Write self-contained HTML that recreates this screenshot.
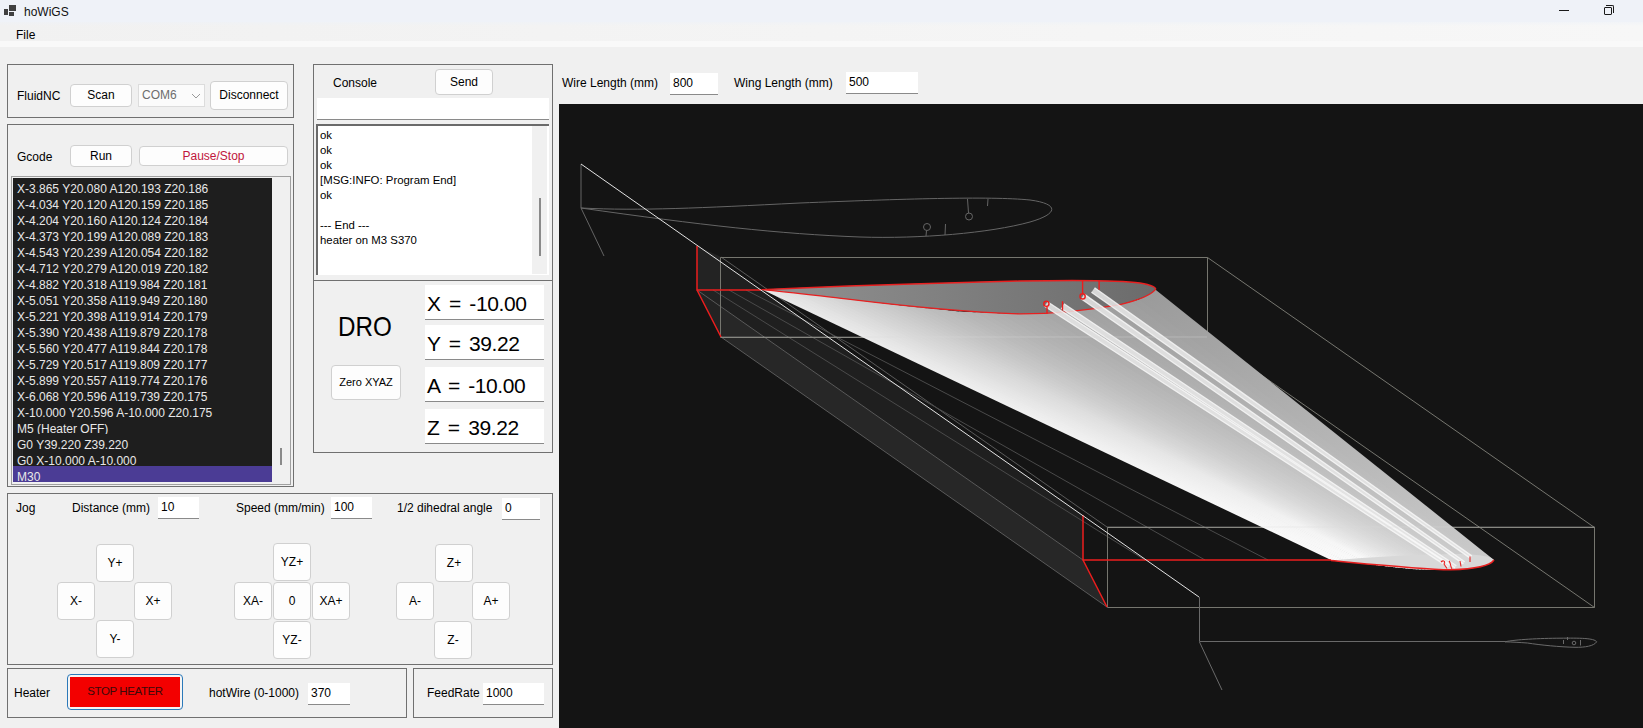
<!DOCTYPE html>
<html><head><meta charset="utf-8">
<style>
*{box-sizing:border-box;margin:0;padding:0}
html,body{width:1643px;height:728px;overflow:hidden;background:#f0f0f0;font-family:"Liberation Sans",sans-serif;font-size:12px;color:#000}
.a{position:absolute}
.t{position:absolute;white-space:nowrap;line-height:14px}
#title{left:0;top:0;width:1643px;height:22px;background:#eff2f8}
#menu{left:0;top:22px;width:1643px;height:25px;background:linear-gradient(to bottom,rgba(238,242,248,0.6),rgba(240,240,240,0) 4px),linear-gradient(to right,#f1f1f1,#f7f7f7);border-bottom:6px solid #f9f9f9}
.grp{position:absolute;border:1px solid #707070}
.btn{position:absolute;background:#fdfdfd;border:1px solid #d0d0d0;border-radius:4px;text-align:center;white-space:nowrap}
.tb{position:absolute;background:#fff;border-bottom:1px solid #8a8a8a;white-space:nowrap;padding-left:3px}
.lb{position:absolute;left:13px;top:178px;width:259px;height:304px;background:#1e1e1e;overflow:hidden}
.lb div{height:16px;line-height:22px;overflow:hidden;padding-left:4px;color:#e8e8e8;white-space:nowrap}
.jb{width:38px;height:38px;line-height:37px}
.dro{font-size:21px;line-height:38px;padding-left:2px;word-spacing:3px;letter-spacing:-0.4px}
.lb div.sel{background:#4b3c95}
.con div{height:15px;line-height:15px;white-space:nowrap;font-size:11.4px}
</style></head><body>
<div id="title" class="a">
  <div class="a" style="left:4px;top:9px;width:4px;height:6px;background:#404040"></div>
  <div class="a" style="left:9px;top:5px;width:7px;height:6px;background:#404040"></div>
  <div class="a" style="left:9px;top:12px;width:5px;height:4px;background:#404040"></div>
  <div class="t" style="left:24px;top:5px;font-size:12px;color:#111">hoWiGS</div>
  <div class="a" style="left:1559px;top:10px;width:10px;height:1px;background:#1a1a1a"></div>
  <div class="a" style="left:1604px;top:7px;width:8px;height:8px;border:1px solid #1a1a1a;border-radius:1px"></div>
  <div class="a" style="left:1606px;top:5px;width:8px;height:8px;border-top:1px solid #1a1a1a;border-right:1px solid #1a1a1a;border-radius:0 2px 0 0"></div>
</div>
<div id="menu" class="a">
  <div class="t" style="left:16px;top:6px">File</div>
</div>

<!-- FluidNC group -->
<div class="grp" style="left:7px;top:64px;width:287px;height:54px"></div>
<div class="t" style="left:17px;top:89px">FluidNC</div>
<div class="btn" style="left:70px;top:84px;width:62px;height:23px;line-height:21px">Scan</div>
<div class="a" style="left:138px;top:84px;width:67px;height:23px;background:#fbfbfb;border:1px solid #dcdcdc;color:#6d6d6d;padding-left:3px;line-height:21px">COM6</div>
<svg class="a chev" style="left:191px;top:93px" width="10" height="6"><path d="M1,1 L5,5 L9,1" fill="none" stroke="#9a9a9a" stroke-width="1"/></svg>
<div class="btn" style="left:210px;top:81px;width:78px;height:29px;line-height:27px">Disconnect</div>

<!-- Gcode group -->
<div class="grp" style="left:7px;top:124px;width:287px;height:363px"></div>
<div class="t" style="left:17px;top:150px">Gcode</div>
<div class="btn" style="left:70px;top:145px;width:62px;height:22px;line-height:20px">Run</div>
<div class="btn" style="left:139px;top:146px;width:149px;height:20px;line-height:18px;color:#c0163c">Pause/Stop</div>
<div class="a" style="left:11px;top:176px;width:280px;height:309px;border:1px solid #a0a0a0;background:#f0f0f0"></div>
<div class="a" style="left:280px;top:448px;width:2px;height:17px;background:#8a8a8a"></div>
<div class="lb" id="gcode"><div>X-3.865 Y20.080 A120.193 Z20.186</div><div>X-4.034 Y20.120 A120.159 Z20.185</div><div>X-4.204 Y20.160 A120.124 Z20.184</div><div>X-4.373 Y20.199 A120.089 Z20.183</div><div>X-4.543 Y20.239 A120.054 Z20.182</div><div>X-4.712 Y20.279 A120.019 Z20.182</div><div>X-4.882 Y20.318 A119.984 Z20.181</div><div>X-5.051 Y20.358 A119.949 Z20.180</div><div>X-5.221 Y20.398 A119.914 Z20.179</div><div>X-5.390 Y20.438 A119.879 Z20.178</div><div>X-5.560 Y20.477 A119.844 Z20.178</div><div>X-5.729 Y20.517 A119.809 Z20.177</div><div>X-5.899 Y20.557 A119.774 Z20.176</div><div>X-6.068 Y20.596 A119.739 Z20.175</div><div>X-10.000 Y20.596 A-10.000 Z20.175</div><div>M5 (Heater OFF)</div><div>G0 Y39.220 Z39.220</div><div>G0 X-10.000 A-10.000</div><div class="sel">M30</div></div>

<!-- Console group -->
<div class="grp" style="left:313px;top:64px;width:240px;height:217px"></div>
<div class="t" style="left:333px;top:76px">Console</div>
<div class="btn" style="left:435px;top:69px;width:58px;height:26px;line-height:24px">Send</div>
<div class="a" style="left:317px;top:98px;width:232px;height:22px;background:#fff;border-bottom:1px solid #8a8a8a"></div>
<div class="a con" style="left:316px;top:124px;width:233px;height:151px;background:#fff;border-top:2px solid #6a6a6a;border-left:2px solid #6a6a6a;padding-left:2px;padding-top:2px"><div>ok</div><div>ok</div><div>ok</div><div>[MSG:INFO: Program End]</div><div>ok</div><div>&nbsp;</div><div>--- End ---</div><div>heater on M3 S370</div></div>

<div class="a" style="left:532px;top:126px;width:15px;height:148px;background:#f0f0f0"></div>
<div class="a" style="left:539px;top:198px;width:2px;height:58px;background:#8a8a8a"></div>
<!-- DRO group -->
<div class="grp" style="left:313px;top:280px;width:240px;height:173px"></div>
<div class="t" style="left:338px;top:312px;font-size:27.5px;line-height:30px;transform:scaleX(0.88);transform-origin:0 0">DRO</div>
<div class="btn" style="left:331px;top:365px;width:70px;height:35px;line-height:33px;font-size:11px">Zero XYAZ</div>
<div class="tb dro" style="left:425px;top:285px;width:119px;height:35px">X = -10.00</div>
<div class="tb dro" style="left:425px;top:325px;width:119px;height:35px">Y = 39.22</div>
<div class="tb dro" style="left:425px;top:367px;width:119px;height:35px">A = -10.00</div>
<div class="tb dro" style="left:425px;top:409px;width:119px;height:35px">Z = 39.22</div>

<!-- Jog group -->
<div class="grp" style="left:7px;top:493px;width:546px;height:172px"></div>
<div class="t" style="left:16px;top:501px">Jog</div>
<div class="t" style="left:72px;top:501px">Distance (mm)</div>
<div class="tb" style="left:158px;top:497px;width:41px;height:22px;line-height:20px">10</div>
<div class="t" style="left:236px;top:501px">Speed (mm/min)</div>
<div class="tb" style="left:331px;top:497px;width:41px;height:22px;line-height:20px">100</div>
<div class="t" style="left:397px;top:501px">1/2 dihedral angle</div>
<div class="tb" style="left:502px;top:498px;width:38px;height:22px;line-height:20px">0</div>
<div class="btn jb" style="left:96px;top:544px">Y+</div>
<div class="btn jb" style="left:57px;top:582px">X-</div>
<div class="btn jb" style="left:134px;top:582px">X+</div>
<div class="btn jb" style="left:96px;top:620px">Y-</div>
<div class="btn jb" style="left:273px;top:543px">YZ+</div>
<div class="btn jb" style="left:234px;top:582px">XA-</div>
<div class="btn jb" style="left:273px;top:582px">0</div>
<div class="btn jb" style="left:312px;top:582px">XA+</div>
<div class="btn jb" style="left:273px;top:621px">YZ-</div>
<div class="btn jb" style="left:435px;top:544px">Z+</div>
<div class="btn jb" style="left:396px;top:582px">A-</div>
<div class="btn jb" style="left:472px;top:582px">A+</div>
<div class="btn jb" style="left:434px;top:621px">Z-</div>

<!-- Heater group -->
<div class="grp" style="left:7px;top:668px;width:400px;height:50px"></div>
<div class="t" style="left:14px;top:686px">Heater</div>
<div class="a" style="left:67px;top:674px;width:116px;height:36px;border:1.5px solid #2b79b9;border-radius:4px;background:#f4f4f4"></div>
<div class="a" style="left:70px;top:677px;width:110px;height:30px;background:#f30000;color:#3a0a0a;text-align:center;line-height:29px;font-size:11.5px;letter-spacing:-0.4px">STOP HEATER</div>
<div class="t" style="left:209px;top:686px">hotWire (0-1000)</div>
<div class="tb" style="left:308px;top:683px;width:42px;height:22px;line-height:20px">370</div>
<div class="grp" style="left:413px;top:668px;width:140px;height:50px"></div>
<div class="t" style="left:427px;top:686px">FeedRate</div>
<div class="tb" style="left:483px;top:683px;width:61px;height:22px;line-height:20px">1000</div>

<!-- right top -->
<div class="t" style="left:562px;top:76px">Wire Length (mm)</div>
<div class="tb" style="left:670px;top:73px;width:48px;height:22px;line-height:20px">800</div>
<div class="t" style="left:734px;top:76px">Wing Length (mm)</div>
<div class="tb" style="left:846px;top:72px;width:72px;height:22px;line-height:20px">500</div>

<svg id="view" class="a" style="left:559px;top:104px" width="1084" height="624" viewBox="559 104 1084 624">
<defs>
<linearGradient id="wg" gradientUnits="userSpaceOnUse" x1="762" y1="289.5" x2="835" y2="136">
<stop offset="0" stop-color="#eeeeee"/><stop offset="0.3" stop-color="#d2d2d2"/><stop offset="0.65" stop-color="#b4b4b4"/><stop offset="1" stop-color="#949494"/></linearGradient>
<linearGradient id="sg" gradientUnits="userSpaceOnUse" x1="1000" y1="330" x2="1450" y2="560">
<stop offset="0" stop-color="#ffffff" stop-opacity="0"/><stop offset="1" stop-color="#ffffff" stop-opacity="0.45"/></linearGradient>
<linearGradient id="rg" gradientUnits="userSpaceOnUse" x1="800" y1="300" x2="1150" y2="290">
<stop offset="0" stop-color="#8e8e8e"/><stop offset="1" stop-color="#6c6c6c"/></linearGradient>
</defs>
<rect x="559" y="104" width="1084" height="624" fill="#141414"/>
<g fill="none" stroke="#656565" stroke-width="1">
<path d="M581,164 L581,208 L604,256"/>
<path d="M581,208 C640,211 700,208 800,203 C900,199 990,196 1030,200 C1060,204 1058,214 1030,222 C990,233 920,239 860,237 C780,234 700,225 581,208 Z"/>
<circle cx="927" cy="227" r="3.5"/><path d="M926.5,230.5 L926,236"/><circle cx="969" cy="216.5" r="3.5"/><path d="M968.5,213 L967.5,199"/><path d="M945.5,224 L945,235"/><path d="M988,199 L987.5,206"/>
</g>
<polygon points="697,290 721,337 1107,607 1083,560" fill="#272727"/>
<polygon points="697,246 697,290 1083,560 1083,515" fill="#1f1f1f"/>
<polygon points="697,246 721,257 721,337 697,290" fill="#232323"/>
<g stroke="#5a5a5a" stroke-width="1" fill="none">
<path d="M697,290 L1083,560 M721,337 L1107,607 M721,257 L1107,527"/>
</g>
<g stroke="#4a4a4a" stroke-width="1" fill="none">
<path d="M713,290 L1145,560 M729,290 L1205,560 M746,290 L1268,560"/>
</g>
<g stroke="#76766f" stroke-width="1" fill="none">
<path d="M720.5,257.5 L1207.5,257.5 L1207.5,337.5 L720.5,337.5 Z M1207.5,257.5 L1594.5,527.5 M1207.5,337.5 L1594.5,607.5 M1107.5,527.5 L1594.5,527.5 L1594.5,607.5 L1107.5,607.5 Z"/>
</g>
<defs><linearGradient id="w0" gradientUnits="userSpaceOnUse" x1="766.1" y1="289.9" x2="1332.7" y2="560.1"><stop offset="0" stop-color="rgb(231,231,231)"/><stop offset="1" stop-color="rgb(250,250,250)"/></linearGradient><linearGradient id="w1" gradientUnits="userSpaceOnUse" x1="774.3" y1="290.5" x2="1336.1" y2="560.4"><stop offset="0" stop-color="rgb(228,228,228)"/><stop offset="1" stop-color="rgb(250,250,250)"/></linearGradient><linearGradient id="w2" gradientUnits="userSpaceOnUse" x1="782.5" y1="291.1" x2="1339.5" y2="560.6"><stop offset="0" stop-color="rgb(226,226,226)"/><stop offset="1" stop-color="rgb(250,250,250)"/></linearGradient><linearGradient id="w3" gradientUnits="userSpaceOnUse" x1="790.7" y1="291.8" x2="1342.9" y2="560.9"><stop offset="0" stop-color="rgb(224,224,224)"/><stop offset="1" stop-color="rgb(250,250,250)"/></linearGradient><linearGradient id="w4" gradientUnits="userSpaceOnUse" x1="798.9" y1="292.9" x2="1346.3" y2="561.4"><stop offset="0" stop-color="rgb(221,221,221)"/><stop offset="1" stop-color="rgb(250,250,250)"/></linearGradient><linearGradient id="w5" gradientUnits="userSpaceOnUse" x1="807.1" y1="293.9" x2="1349.7" y2="561.8"><stop offset="0" stop-color="rgb(219,219,219)"/><stop offset="1" stop-color="rgb(250,250,250)"/></linearGradient><linearGradient id="w6" gradientUnits="userSpaceOnUse" x1="815.3" y1="294.9" x2="1353.1" y2="562.2"><stop offset="0" stop-color="rgb(217,217,217)"/><stop offset="1" stop-color="rgb(250,250,250)"/></linearGradient><linearGradient id="w7" gradientUnits="userSpaceOnUse" x1="823.5" y1="296.0" x2="1356.5" y2="562.6"><stop offset="0" stop-color="rgb(215,215,215)"/><stop offset="1" stop-color="rgb(250,250,250)"/></linearGradient><linearGradient id="w8" gradientUnits="userSpaceOnUse" x1="831.6" y1="297.0" x2="1359.9" y2="563.1"><stop offset="0" stop-color="rgb(212,212,212)"/><stop offset="1" stop-color="rgb(250,250,250)"/></linearGradient><linearGradient id="w9" gradientUnits="userSpaceOnUse" x1="839.8" y1="298.1" x2="1363.3" y2="563.5"><stop offset="0" stop-color="rgb(210,210,210)"/><stop offset="1" stop-color="rgb(250,250,250)"/></linearGradient><linearGradient id="w10" gradientUnits="userSpaceOnUse" x1="848.0" y1="299.1" x2="1366.7" y2="563.9"><stop offset="0" stop-color="rgb(208,208,208)"/><stop offset="1" stop-color="rgb(250,250,250)"/></linearGradient><linearGradient id="w11" gradientUnits="userSpaceOnUse" x1="856.2" y1="300.1" x2="1370.1" y2="564.4"><stop offset="0" stop-color="rgb(206,206,206)"/><stop offset="1" stop-color="rgb(250,250,250)"/></linearGradient><linearGradient id="w12" gradientUnits="userSpaceOnUse" x1="864.4" y1="301.1" x2="1373.4" y2="564.8"><stop offset="0" stop-color="rgb(204,204,204)"/><stop offset="1" stop-color="rgb(250,250,250)"/></linearGradient><linearGradient id="w13" gradientUnits="userSpaceOnUse" x1="872.6" y1="302.1" x2="1376.8" y2="565.2"><stop offset="0" stop-color="rgb(202,202,202)"/><stop offset="1" stop-color="rgb(250,250,250)"/></linearGradient><linearGradient id="w14" gradientUnits="userSpaceOnUse" x1="880.8" y1="303.1" x2="1380.2" y2="565.6"><stop offset="0" stop-color="rgb(200,200,200)"/><stop offset="1" stop-color="rgb(248,248,248)"/></linearGradient><linearGradient id="w15" gradientUnits="userSpaceOnUse" x1="889.0" y1="304.1" x2="1383.6" y2="566.0"><stop offset="0" stop-color="rgb(198,198,198)"/><stop offset="1" stop-color="rgb(246,246,246)"/></linearGradient><linearGradient id="w16" gradientUnits="userSpaceOnUse" x1="897.2" y1="305.1" x2="1387.0" y2="566.4"><stop offset="0" stop-color="rgb(196,196,196)"/><stop offset="1" stop-color="rgb(244,244,244)"/></linearGradient><linearGradient id="w17" gradientUnits="userSpaceOnUse" x1="905.4" y1="306.1" x2="1390.4" y2="566.8"><stop offset="0" stop-color="rgb(194,194,194)"/><stop offset="1" stop-color="rgb(242,242,242)"/></linearGradient><linearGradient id="w18" gradientUnits="userSpaceOnUse" x1="913.6" y1="306.9" x2="1393.8" y2="567.2"><stop offset="0" stop-color="rgb(192,192,192)"/><stop offset="1" stop-color="rgb(240,240,240)"/></linearGradient><linearGradient id="w19" gradientUnits="userSpaceOnUse" x1="921.8" y1="307.8" x2="1397.2" y2="567.5"><stop offset="0" stop-color="rgb(190,190,190)"/><stop offset="1" stop-color="rgb(238,238,238)"/></linearGradient><linearGradient id="w20" gradientUnits="userSpaceOnUse" x1="930.0" y1="308.6" x2="1400.6" y2="567.9"><stop offset="0" stop-color="rgb(188,188,188)"/><stop offset="1" stop-color="rgb(236,236,236)"/></linearGradient><linearGradient id="w21" gradientUnits="userSpaceOnUse" x1="938.2" y1="309.4" x2="1404.0" y2="568.2"><stop offset="0" stop-color="rgb(187,187,187)"/><stop offset="1" stop-color="rgb(235,235,235)"/></linearGradient><linearGradient id="w22" gradientUnits="userSpaceOnUse" x1="946.4" y1="310.2" x2="1407.4" y2="568.6"><stop offset="0" stop-color="rgb(185,185,185)"/><stop offset="1" stop-color="rgb(233,233,233)"/></linearGradient><linearGradient id="w23" gradientUnits="userSpaceOnUse" x1="954.6" y1="311.1" x2="1410.8" y2="568.9"><stop offset="0" stop-color="rgb(183,183,183)"/><stop offset="1" stop-color="rgb(231,231,231)"/></linearGradient><linearGradient id="w24" gradientUnits="userSpaceOnUse" x1="962.7" y1="311.8" x2="1414.2" y2="569.2"><stop offset="0" stop-color="rgb(181,181,181)"/><stop offset="1" stop-color="rgb(229,229,229)"/></linearGradient><linearGradient id="w25" gradientUnits="userSpaceOnUse" x1="970.9" y1="312.1" x2="1417.6" y2="569.4"><stop offset="0" stop-color="rgb(180,180,180)"/><stop offset="1" stop-color="rgb(228,228,228)"/></linearGradient><linearGradient id="w26" gradientUnits="userSpaceOnUse" x1="979.1" y1="312.4" x2="1421.0" y2="569.5"><stop offset="0" stop-color="rgb(178,178,178)"/><stop offset="1" stop-color="rgb(226,226,226)"/></linearGradient><linearGradient id="w27" gradientUnits="userSpaceOnUse" x1="987.3" y1="312.7" x2="1424.4" y2="569.6"><stop offset="0" stop-color="rgb(176,176,176)"/><stop offset="1" stop-color="rgb(224,224,224)"/></linearGradient><linearGradient id="w28" gradientUnits="userSpaceOnUse" x1="995.5" y1="313.0" x2="1427.8" y2="569.7"><stop offset="0" stop-color="rgb(175,175,175)"/><stop offset="1" stop-color="rgb(223,223,223)"/></linearGradient><linearGradient id="w29" gradientUnits="userSpaceOnUse" x1="1003.7" y1="313.3" x2="1431.2" y2="569.8"><stop offset="0" stop-color="rgb(173,173,173)"/><stop offset="1" stop-color="rgb(221,221,221)"/></linearGradient><linearGradient id="w30" gradientUnits="userSpaceOnUse" x1="1011.9" y1="313.6" x2="1434.6" y2="570.0"><stop offset="0" stop-color="rgb(172,172,172)"/><stop offset="1" stop-color="rgb(220,220,220)"/></linearGradient><linearGradient id="w31" gradientUnits="userSpaceOnUse" x1="1020.1" y1="313.9" x2="1438.0" y2="570.1"><stop offset="0" stop-color="rgb(171,171,171)"/><stop offset="1" stop-color="rgb(219,219,219)"/></linearGradient><linearGradient id="w32" gradientUnits="userSpaceOnUse" x1="1028.3" y1="313.4" x2="1441.4" y2="569.9"><stop offset="0" stop-color="rgb(169,169,169)"/><stop offset="1" stop-color="rgb(217,217,217)"/></linearGradient><linearGradient id="w33" gradientUnits="userSpaceOnUse" x1="1036.5" y1="312.9" x2="1444.8" y2="569.7"><stop offset="0" stop-color="rgb(168,168,168)"/><stop offset="1" stop-color="rgb(216,216,216)"/></linearGradient><linearGradient id="w34" gradientUnits="userSpaceOnUse" x1="1044.7" y1="312.4" x2="1448.2" y2="569.5"><stop offset="0" stop-color="rgb(166,166,166)"/><stop offset="1" stop-color="rgb(214,214,214)"/></linearGradient><linearGradient id="w35" gradientUnits="userSpaceOnUse" x1="1052.9" y1="311.9" x2="1451.6" y2="569.2"><stop offset="0" stop-color="rgb(165,165,165)"/><stop offset="1" stop-color="rgb(213,213,213)"/></linearGradient><linearGradient id="w36" gradientUnits="userSpaceOnUse" x1="1061.1" y1="311.4" x2="1454.9" y2="569.0"><stop offset="0" stop-color="rgb(164,164,164)"/><stop offset="1" stop-color="rgb(212,212,212)"/></linearGradient><linearGradient id="w37" gradientUnits="userSpaceOnUse" x1="1069.3" y1="310.9" x2="1458.3" y2="568.8"><stop offset="0" stop-color="rgb(163,163,163)"/><stop offset="1" stop-color="rgb(211,211,211)"/></linearGradient><linearGradient id="w38" gradientUnits="userSpaceOnUse" x1="1077.5" y1="310.4" x2="1461.7" y2="568.6"><stop offset="0" stop-color="rgb(162,162,162)"/><stop offset="1" stop-color="rgb(210,210,210)"/></linearGradient><linearGradient id="w39" gradientUnits="userSpaceOnUse" x1="1085.7" y1="309.3" x2="1465.1" y2="568.2"><stop offset="0" stop-color="rgb(161,161,161)"/><stop offset="1" stop-color="rgb(209,209,209)"/></linearGradient><linearGradient id="w40" gradientUnits="userSpaceOnUse" x1="1093.8" y1="308.2" x2="1468.5" y2="567.7"><stop offset="0" stop-color="rgb(160,160,160)"/><stop offset="1" stop-color="rgb(208,208,208)"/></linearGradient><linearGradient id="w41" gradientUnits="userSpaceOnUse" x1="1102.0" y1="307.1" x2="1471.9" y2="567.3"><stop offset="0" stop-color="rgb(159,159,159)"/><stop offset="1" stop-color="rgb(207,207,207)"/></linearGradient><linearGradient id="w42" gradientUnits="userSpaceOnUse" x1="1110.2" y1="306.0" x2="1475.3" y2="566.8"><stop offset="0" stop-color="rgb(158,158,158)"/><stop offset="1" stop-color="rgb(206,206,206)"/></linearGradient><linearGradient id="w43" gradientUnits="userSpaceOnUse" x1="1118.4" y1="304.9" x2="1478.7" y2="566.4"><stop offset="0" stop-color="rgb(157,157,157)"/><stop offset="1" stop-color="rgb(205,205,205)"/></linearGradient><linearGradient id="w44" gradientUnits="userSpaceOnUse" x1="1126.6" y1="303.0" x2="1482.1" y2="565.5"><stop offset="0" stop-color="rgb(157,157,157)"/><stop offset="1" stop-color="rgb(205,205,205)"/></linearGradient><linearGradient id="w45" gradientUnits="userSpaceOnUse" x1="1134.8" y1="300.7" x2="1485.5" y2="564.6"><stop offset="0" stop-color="rgb(156,156,156)"/><stop offset="1" stop-color="rgb(204,204,204)"/></linearGradient><linearGradient id="w46" gradientUnits="userSpaceOnUse" x1="1143.0" y1="298.4" x2="1488.9" y2="563.7"><stop offset="0" stop-color="rgb(155,155,155)"/><stop offset="1" stop-color="rgb(203,203,203)"/></linearGradient><linearGradient id="w47" gradientUnits="userSpaceOnUse" x1="1151.2" y1="293.3" x2="1492.3" y2="561.5"><stop offset="0" stop-color="rgb(155,155,155)"/><stop offset="1" stop-color="rgb(203,203,203)"/></linearGradient></defs>
<g><polygon points="762.0,289.6 775.1,290.6 1336.4,560.4 1331.0,560.0" fill="url(#w0)"/><polygon points="770.2,290.2 783.3,291.2 1339.8,560.7 1334.4,560.3" fill="url(#w1)"/><polygon points="778.4,290.8 791.5,291.9 1343.2,561.0 1337.8,560.5" fill="url(#w2)"/><polygon points="786.6,291.4 799.7,293.0 1346.6,561.4 1341.2,560.8" fill="url(#w3)"/><polygon points="794.8,292.4 807.9,294.0 1350.0,561.8 1344.6,561.1" fill="url(#w4)"/><polygon points="803.0,293.4 816.1,295.1 1353.4,562.3 1348.0,561.6" fill="url(#w5)"/><polygon points="811.2,294.4 824.3,296.1 1356.8,562.7 1351.4,562.0" fill="url(#w6)"/><polygon points="819.4,295.5 832.5,297.1 1360.2,563.1 1354.8,562.4" fill="url(#w7)"/><polygon points="827.5,296.5 840.7,298.2 1363.6,563.6 1358.2,562.9" fill="url(#w8)"/><polygon points="835.7,297.5 848.9,299.2 1367.0,564.0 1361.6,563.3" fill="url(#w9)"/><polygon points="843.9,298.6 857.0,300.2 1370.4,564.4 1365.0,563.7" fill="url(#w10)"/><polygon points="852.1,299.6 865.2,301.2 1373.8,564.8 1368.4,564.1" fill="url(#w11)"/><polygon points="860.3,300.6 873.4,302.2 1377.2,565.2 1371.8,564.6" fill="url(#w12)"/><polygon points="868.5,301.6 881.6,303.2 1380.6,565.6 1375.1,565.0" fill="url(#w13)"/><polygon points="876.7,302.6 889.8,304.2 1384.0,566.1 1378.5,565.4" fill="url(#w14)"/><polygon points="884.9,303.6 898.0,305.2 1387.4,566.5 1381.9,565.8" fill="url(#w15)"/><polygon points="893.1,304.6 906.2,306.2 1390.8,566.9 1385.3,566.2" fill="url(#w16)"/><polygon points="901.3,305.6 914.4,307.0 1394.2,567.2 1388.7,566.6" fill="url(#w17)"/><polygon points="909.5,306.5 922.6,307.8 1397.6,567.6 1392.1,567.0" fill="url(#w18)"/><polygon points="917.7,307.3 930.8,308.7 1401.0,567.9 1395.5,567.4" fill="url(#w19)"/><polygon points="925.9,308.2 939.0,309.5 1404.3,568.3 1398.9,567.7" fill="url(#w20)"/><polygon points="934.1,309.0 947.2,310.3 1407.7,568.6 1402.3,568.1" fill="url(#w21)"/><polygon points="942.3,309.8 955.4,311.2 1411.1,568.9 1405.7,568.4" fill="url(#w22)"/><polygon points="950.5,310.7 963.6,311.9 1414.5,569.2 1409.1,568.7" fill="url(#w23)"/><polygon points="958.6,311.5 971.8,312.2 1417.9,569.4 1412.5,569.1" fill="url(#w24)"/><polygon points="966.8,312.0 980.0,312.5 1421.3,569.5 1415.9,569.3" fill="url(#w25)"/><polygon points="975.0,312.3 988.1,312.8 1424.7,569.6 1419.3,569.4" fill="url(#w26)"/><polygon points="983.2,312.6 996.3,313.1 1428.1,569.7 1422.7,569.5" fill="url(#w27)"/><polygon points="991.4,312.9 1004.5,313.4 1431.5,569.9 1426.1,569.7" fill="url(#w28)"/><polygon points="999.6,313.2 1012.7,313.7 1434.9,570.0 1429.5,569.8" fill="url(#w29)"/><polygon points="1007.8,313.5 1020.9,313.8 1438.3,570.1 1432.9,569.9" fill="url(#w30)"/><polygon points="1016.0,313.8 1029.1,313.3 1441.7,569.8 1436.3,570.0" fill="url(#w31)"/><polygon points="1024.2,313.6 1037.3,312.8 1445.1,569.6 1439.7,570.0" fill="url(#w32)"/><polygon points="1032.4,313.1 1045.5,312.3 1448.5,569.4 1443.1,569.8" fill="url(#w33)"/><polygon points="1040.6,312.6 1053.7,311.8 1451.9,569.2 1446.5,569.6" fill="url(#w34)"/><polygon points="1048.8,312.1 1061.9,311.3 1455.3,569.0 1449.9,569.4" fill="url(#w35)"/><polygon points="1057.0,311.6 1070.1,310.8 1458.7,568.8 1453.2,569.1" fill="url(#w36)"/><polygon points="1065.2,311.1 1078.3,310.3 1462.1,568.6 1456.6,568.9" fill="url(#w37)"/><polygon points="1073.4,310.6 1086.5,309.2 1465.5,568.1 1460.0,568.7" fill="url(#w38)"/><polygon points="1081.6,309.8 1094.7,308.1 1468.9,567.7 1463.4,568.4" fill="url(#w39)"/><polygon points="1089.8,308.7 1102.9,307.0 1472.3,567.2 1466.8,567.9" fill="url(#w40)"/><polygon points="1097.9,307.6 1111.1,305.9 1475.7,566.8 1470.2,567.5" fill="url(#w41)"/><polygon points="1106.1,306.6 1119.2,304.8 1479.1,566.3 1473.6,567.0" fill="url(#w42)"/><polygon points="1114.3,305.5 1127.4,302.7 1482.5,565.4 1477.0,566.6" fill="url(#w43)"/><polygon points="1122.5,304.1 1135.6,300.5 1485.8,564.5 1480.4,566.0" fill="url(#w44)"/><polygon points="1130.7,301.8 1143.8,298.2 1489.2,563.6 1483.8,565.1" fill="url(#w45)"/><polygon points="1138.9,299.5 1152.0,292.6 1492.6,561.2 1487.2,564.1" fill="url(#w46)"/><polygon points="1147.1,297.0 1155.3,289.6 1494.0,560.0 1490.6,563.1" fill="url(#w47)"/></g>
<path d="M762,289.6 C820,287 900,284 1019,281 C1077,280 1120,280 1140,283 C1152,285 1157,288 1155.3,289.6 C1150,296 1135,301 1120,304.6 C1090,310 1050,314 1019,313.9 C960,312 904,306 846,298.9 C820,296 790,292 762,289.6 Z" fill="url(#rg)" stroke="#e82020" stroke-width="1.35"/>
<path d="M1331,560.5 C1380,565 1420,569 1451,569.8 C1475,569 1490,566 1494,560 C1490,556 1481,555 1460,554 C1420,554 1370,557 1331,560.5 Z" fill="#d8d8d8" stroke="none"/>
<path d="M1331,560.5 C1380,565 1420,569 1451,569.8 C1475,569 1490,566 1494,560" fill="none" stroke="#e82020" stroke-width="1.5"/>
<polygon points="1044.5,306.3 1448.3,567.1 1449.7,564.9 1047.5,301.7" fill="#e8e8e8" opacity="0.85"/><path d="M1044.5,306.3 L1448.3,567.1 M1047.5,301.7 L1449.7,564.9" stroke="#fafafa" stroke-width="1.3" opacity="0.8" fill="none"/>
<polygon points="1061.0,308.3 1455.0,567.9 1456.4,565.7 1064.0,303.7" fill="#e8e8e8" opacity="0.85"/><path d="M1061.0,308.3 L1455.0,567.9 M1064.0,303.7 L1456.4,565.7" stroke="#fafafa" stroke-width="1.3" opacity="0.8" fill="none"/>
<polygon points="1081.0,298.7 1463.3,563.9 1464.7,561.7 1084.2,294.1" fill="#e8e8e8" opacity="0.85"/><path d="M1081.0,298.7 L1463.3,563.9 M1084.2,294.1 L1464.7,561.7" stroke="#fafafa" stroke-width="1.3" opacity="0.8" fill="none"/>
<polygon points="1091.4,292.2 1470.2,558.1 1471.8,555.9 1094.6,287.8" fill="#e8e8e8" opacity="0.85"/><path d="M1091.4,292.2 L1470.2,558.1 M1094.6,287.8 L1471.8,555.9" stroke="#fafafa" stroke-width="1.3" opacity="0.8" fill="none"/>
<g stroke="#ee1c1c" stroke-width="1.4" fill="none"><circle cx="1046.4" cy="303.8" r="2.6"/><path d="M1047,306.5 L1047,313.7 M1062.5,301.3 L1062.5,310.4 M1082.6,293.8 L1082.6,280.7 M1099.1,280.7 L1099.1,289.8"/><circle cx="1082.6" cy="296.4" r="2.6"/></g>
<g stroke="#e82222" stroke-width="1.1" fill="none"><path d="M1441,562 C1443,560 1446,561 1444,564 L1447,568.5 M1449,561 C1451,563 1450,566 1452,569 M1460,561 L1461,566.5 M1470,556.5 L1470,562"/></g>
<g stroke="#ec1e1e" stroke-width="1.5" fill="none">
<path d="M697,246 L697,290 L762,290 M697,290 L721,337 M1083,515 L1083,560 L1331,560 M1083,560 L1107,607"/>
</g>
<path d="M721,337 L1207,337 M1107,527 L1595,527" stroke="#dcdcdc" stroke-width="1" opacity="0.35"/>
<line x1="581" y1="164" x2="1199" y2="597" stroke="#e4e4e4" stroke-width="1.0" opacity="1"/>
<g stroke="#6a6a6a" stroke-width="1" fill="none"><path d="M1199.5,597 L1199.5,641.5 L1505,641.5 M1199.5,642 L1222,690"/>
<path d="M1505,641.8 C1515,639.5 1540,638.3 1560,638.2 C1580,638 1594,638 1596.7,641.8 C1594,646 1585,647.5 1575,647.3 C1560,647 1540,645 1527.5,643 C1520,642.5 1512,642 1505,641.8 Z"/><circle cx="1574" cy="643" r="1.8"/><path d="M1563.5,640 L1563.5,644 M1580.5,640 L1580.5,645.5 M1567.5,637 L1567.5,640"/></g>
</svg>
</body></html>
